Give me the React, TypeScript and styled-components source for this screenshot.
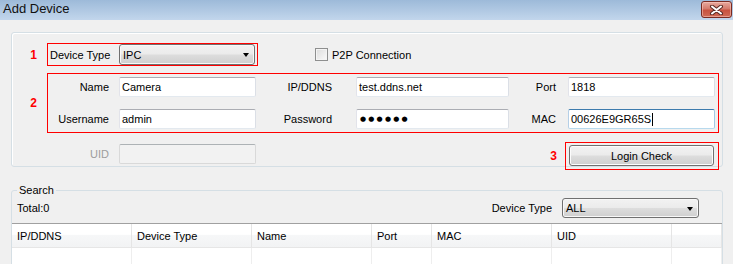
import React from 'react';
import styled, { createGlobalStyle } from 'styled-components';

const GlobalStyles = createGlobalStyle`
  html, body {
    margin: 0;
    padding: 0;
    background: #f0f0f0;
  }
  body {
    font-family: "Liberation Sans", Arial, sans-serif;
    font-size: 11px;
    color: #000;
  }
  * { box-sizing: border-box; }
`;

const Window = styled.div`
  width: 733px;
  height: 264px;
  overflow: hidden;
  background: #f0f0f0;
  display: flex;
  flex-direction: column;
`;

const TitleBar = styled.div`
  height: 20px;
  flex: none;
  display: flex;
  justify-content: space-between;
  align-items: flex-start;
  background: linear-gradient(#9dbad9, #c2d6ec);
`;

const Title = styled.span`
  font-size: 13px;
  line-height: 18px;
  padding-left: 3px;
  color: #101010;
`;

const CloseButton = styled.div`
  width: 31px;
  height: 17px;
  margin: 1px 1px 0 0;
  border: 1px solid #7a2b22;
  border-radius: 3px;
  background: linear-gradient(#e7aa9f 0%, #d57b6c 45%, #c8523f 55%, #cf6a55 100%);
  box-shadow: inset 0 0 0 1px rgba(255, 210, 200, 0.5);
  display: flex;
  align-items: center;
  justify-content: center;
`;

const Content = styled.div`
  padding: 12px 0 0 11px;
  flex: 1;
  display: flex;
  flex-direction: column;
`;

const GroupBox = styled.div`
  width: 712px;
  height: 135px;
  border: 1px solid #d5dfe5;
  border-radius: 3px;
  box-shadow: inset 1px 1px 0 #fff;
  padding: 10px 3px 0 0;
  display: flex;
  flex-direction: column;
`;

const Row = styled.div<{ $top?: number; $height: number }>`
  display: flex;
  align-items: center;
  height: ${(p) => p.$height}px;
  margin-top: ${(p) => p.$top ?? 0}px;
  flex: none;
`;

const Mark = styled.span<{ $width: number; $gap: number }>`
  width: ${(p) => p.$width}px;
  padding-right: ${(p) => p.$gap}px;
  text-align: right;
  color: #ff0000;
  font-weight: bold;
  font-size: 12px;
  flex: none;
`;

const RedFrame = styled.div`
  border: 1px solid #ff0000;
  flex: none;
`;

const TypeFrame = styled(RedFrame)`
  width: 211px;
  height: 23px;
  display: flex;
  align-items: center;
  padding-left: 2px;
`;

const FieldsFrame = styled(RedFrame)`
  width: 672px;
  height: 60px;
  padding: 3px 0;
  display: grid;
  grid-template-columns: 71px 137px 100px 153px 59px 147px;
  grid-template-rows: 20px 20px;
  row-gap: 12px;
  align-items: center;
`;

const ActionFrame = styled(RedFrame)`
  width: 154px;
  height: 28px;
  padding: 2px 0 0 3px;
`;

const Label = styled.span<{ $gap: number; $muted?: boolean }>`
  display: block;
  text-align: right;
  padding-right: ${(p) => p.$gap}px;
  color: ${(p) => (p.$muted ? '#9d9d9d' : '#000')};
`;

const PlainLabel = styled.span<{ $width?: number; $gap?: number }>`
  width: ${(p) => (p.$width ? `${p.$width}px` : 'auto')};
  margin-right: ${(p) => p.$gap ?? 0}px;
  flex: none;
`;

const TextBox = styled.div<{ $width: number; $focused?: boolean; $disabled?: boolean }>`
  width: ${(p) => p.$width}px;
  height: 20px;
  padding-left: 2px;
  display: flex;
  align-items: center;
  background: ${(p) => (p.$disabled ? '#f2f2f2' : '#fff')};
  border: 1px solid;
  border-radius: 2px;
  border-color: ${(p) =>
    p.$focused
      ? '#3d7bad #a4c9e3 #b7d9ed #b5cfe7'
      : p.$disabled
      ? '#adb2b5 #d9d9d9 #d9d9d9 #d9d9d9'
      : '#abadb3 #dbdfe6 #e3e9ef #e2e3ea'};
  white-space: nowrap;
  overflow: hidden;
`;

const Caret = styled.span`
  width: 1px;
  height: 13px;
  background: #000;
  margin-left: 1px;
`;

const Dots = styled.span`
  font-family: "DejaVu Sans", sans-serif;
  font-size: 7px;
  letter-spacing: 2.2px;
  padding-left: 1px;
`;

const win7Gradient = `linear-gradient(#f2f2f2 0%, #ebebeb 48%, #dddddd 52%, #cfcfcf 100%)`;

const Combo = styled.div<{ $width: number; $height: number }>`
  width: ${(p) => p.$width}px;
  height: ${(p) => p.$height}px;
  border: 1px solid #707070;
  border-radius: 3px;
  background: ${win7Gradient};
  box-shadow: inset 0 0 0 1px #f8f8f8;
  display: flex;
  align-items: center;
  justify-content: space-between;
  padding: 0 5px 0 3px;
  flex: none;
`;

const Arrow = styled.span`
  width: 0;
  height: 0;
  border-left: 3.5px solid transparent;
  border-right: 3.5px solid transparent;
  border-top: 4px solid #000;
  margin-top: 1px;
`;

const CheckBox = styled.span`
  width: 13px;
  height: 13px;
  border: 1px solid #8e8f8f;
  background: linear-gradient(135deg, #dcdcdc, #fafafa);
  box-shadow: inset 0 0 0 1px #f4f4f4;
  margin: 0 4px 0 57px;
  flex: none;
`;

const PushButton = styled.div`
  width: 145px;
  height: 21px;
  border: 1px solid #707070;
  border-radius: 3px;
  background: ${win7Gradient};
  box-shadow: inset 0 0 0 1px #fcfcfc;
  display: flex;
  align-items: center;
  justify-content: center;
`;

const UidBlock = styled.div`
  display: flex;
  align-items: center;
  margin: 2px 0 0 35px;
  align-self: flex-start;
`;

const RightBlock = styled.div`
  margin-left: auto;
  display: flex;
  align-items: center;
`;

const SearchBox = styled.fieldset`
  width: 712px;
  height: 90px;
  margin: 17px 0 0 0;
  padding: 0;
  min-width: 0;
  border: 1px solid #d5dfe5;
  border-radius: 3px;
  flex: none;
`;

const Legend = styled.legend`
  margin-left: 5px;
  padding: 0 2px;
  line-height: 13px;
  font-size: 11px;
`;

const Toolbar = styled.div`
  height: 26px;
  display: flex;
  align-items: center;
  padding: 1px 23px 5px 5px;
`;

const Spacer = styled.div`
  flex: 1;
`;

const columns = '120px 120px 120px 60px 120px 120px 1fr';

const Grid = styled.div`
  border-top: 1px solid #a0a0a0;
  background: #fff;
`;

const HeaderRow = styled.div`
  display: grid;
  grid-template-columns: ${columns};
  height: 24px;
  border-bottom: 1px solid #e6e6e6;
  background: linear-gradient(#ffffff 0%, #ffffff 45%, #f6f7f8 50%, #f2f3f4 100%);
`;

const HeaderCell = styled.div`
  border-right: 1px solid #e5e5e5;
  padding-left: 5px;
  display: flex;
  align-items: center;
`;

const BodyRow = styled.div`
  display: grid;
  grid-template-columns: ${columns};
  height: 40px;
`;

const BodyCell = styled.div`
  border-right: 1px solid #eeeeee;
`;

const headers = ['IP/DDNS', 'Device Type', 'Name', 'Port', 'MAC', 'UID', ''];

export default function App() {
  return (
    <Window>
      <GlobalStyles />
      <TitleBar>
        <Title>Add Device</Title>
        <CloseButton>
          <svg width="15" height="10" viewBox="0 0 15 10">
            <path d="M3 1.5 L12 8.5 M12 1.5 L3 8.5" stroke="#5a2a24" strokeWidth="4" strokeLinecap="round" />
            <path d="M3 1.5 L12 8.5 M12 1.5 L3 8.5" stroke="#ffffff" strokeWidth="2" strokeLinecap="round" />
          </svg>
        </CloseButton>
      </TitleBar>

      <Content>
        <GroupBox>
          <Row $height={23}>
            <Mark $width={35} $gap={10}>1</Mark>
            <TypeFrame>
              <PlainLabel $width={69}>Device Type</PlainLabel>
              <Combo $width={136} $height={21}>
                <span>IPC</span>
                <Arrow />
              </Combo>
            </TypeFrame>
            <CheckBox />
            <span>P2P Connection</span>
          </Row>

          <Row $top={7} $height={60}>
            <Mark $width={35} $gap={10}>2</Mark>
            <FieldsFrame>
              <Label $gap={10}>Name</Label>
              <TextBox $width={137}>Camera</TextBox>
              <Label $gap={24}>IP/DDNS</Label>
              <TextBox $width={153}>test.ddns.net</TextBox>
              <Label $gap={12}>Port</Label>
              <TextBox $width={147}>1818</TextBox>

              <Label $gap={10}>Username</Label>
              <TextBox $width={137}>admin</TextBox>
              <Label $gap={24}>Password</Label>
              <TextBox $width={153}>
                <Dots>●●●●●●</Dots>
              </TextBox>
              <Label $gap={12}>MAC</Label>
              <TextBox $width={147} $focused>
                00626E9GR65S
                <Caret />
              </TextBox>
            </FieldsFrame>
          </Row>

          <Row $top={9} $height={28}>
            <UidBlock>
              <PlainLabel $width={72}>
                <Label $gap={10} $muted>UID</Label>
              </PlainLabel>
              <TextBox $width={137} $disabled />
            </UidBlock>
            <RightBlock>
              <Mark $width={18} $gap={8}>3</Mark>
              <ActionFrame>
                <PushButton>Login Check</PushButton>
              </ActionFrame>
            </RightBlock>
          </Row>
        </GroupBox>

        <SearchBox>
          <Legend>Search</Legend>
          <Toolbar>
            <span>Total:0</span>
            <Spacer />
            <PlainLabel $gap={10}>Device Type</PlainLabel>
            <Combo $width={137} $height={20}>
              <span>ALL</span>
              <Arrow />
            </Combo>
          </Toolbar>
          <Grid>
            <HeaderRow>
              {headers.map((h, i) => (
                <HeaderCell key={i}>{h}</HeaderCell>
              ))}
            </HeaderRow>
            <BodyRow>
              {headers.map((_, i) => (
                <BodyCell key={i} />
              ))}
            </BodyRow>
          </Grid>
        </SearchBox>
      </Content>
    </Window>
  );
}
